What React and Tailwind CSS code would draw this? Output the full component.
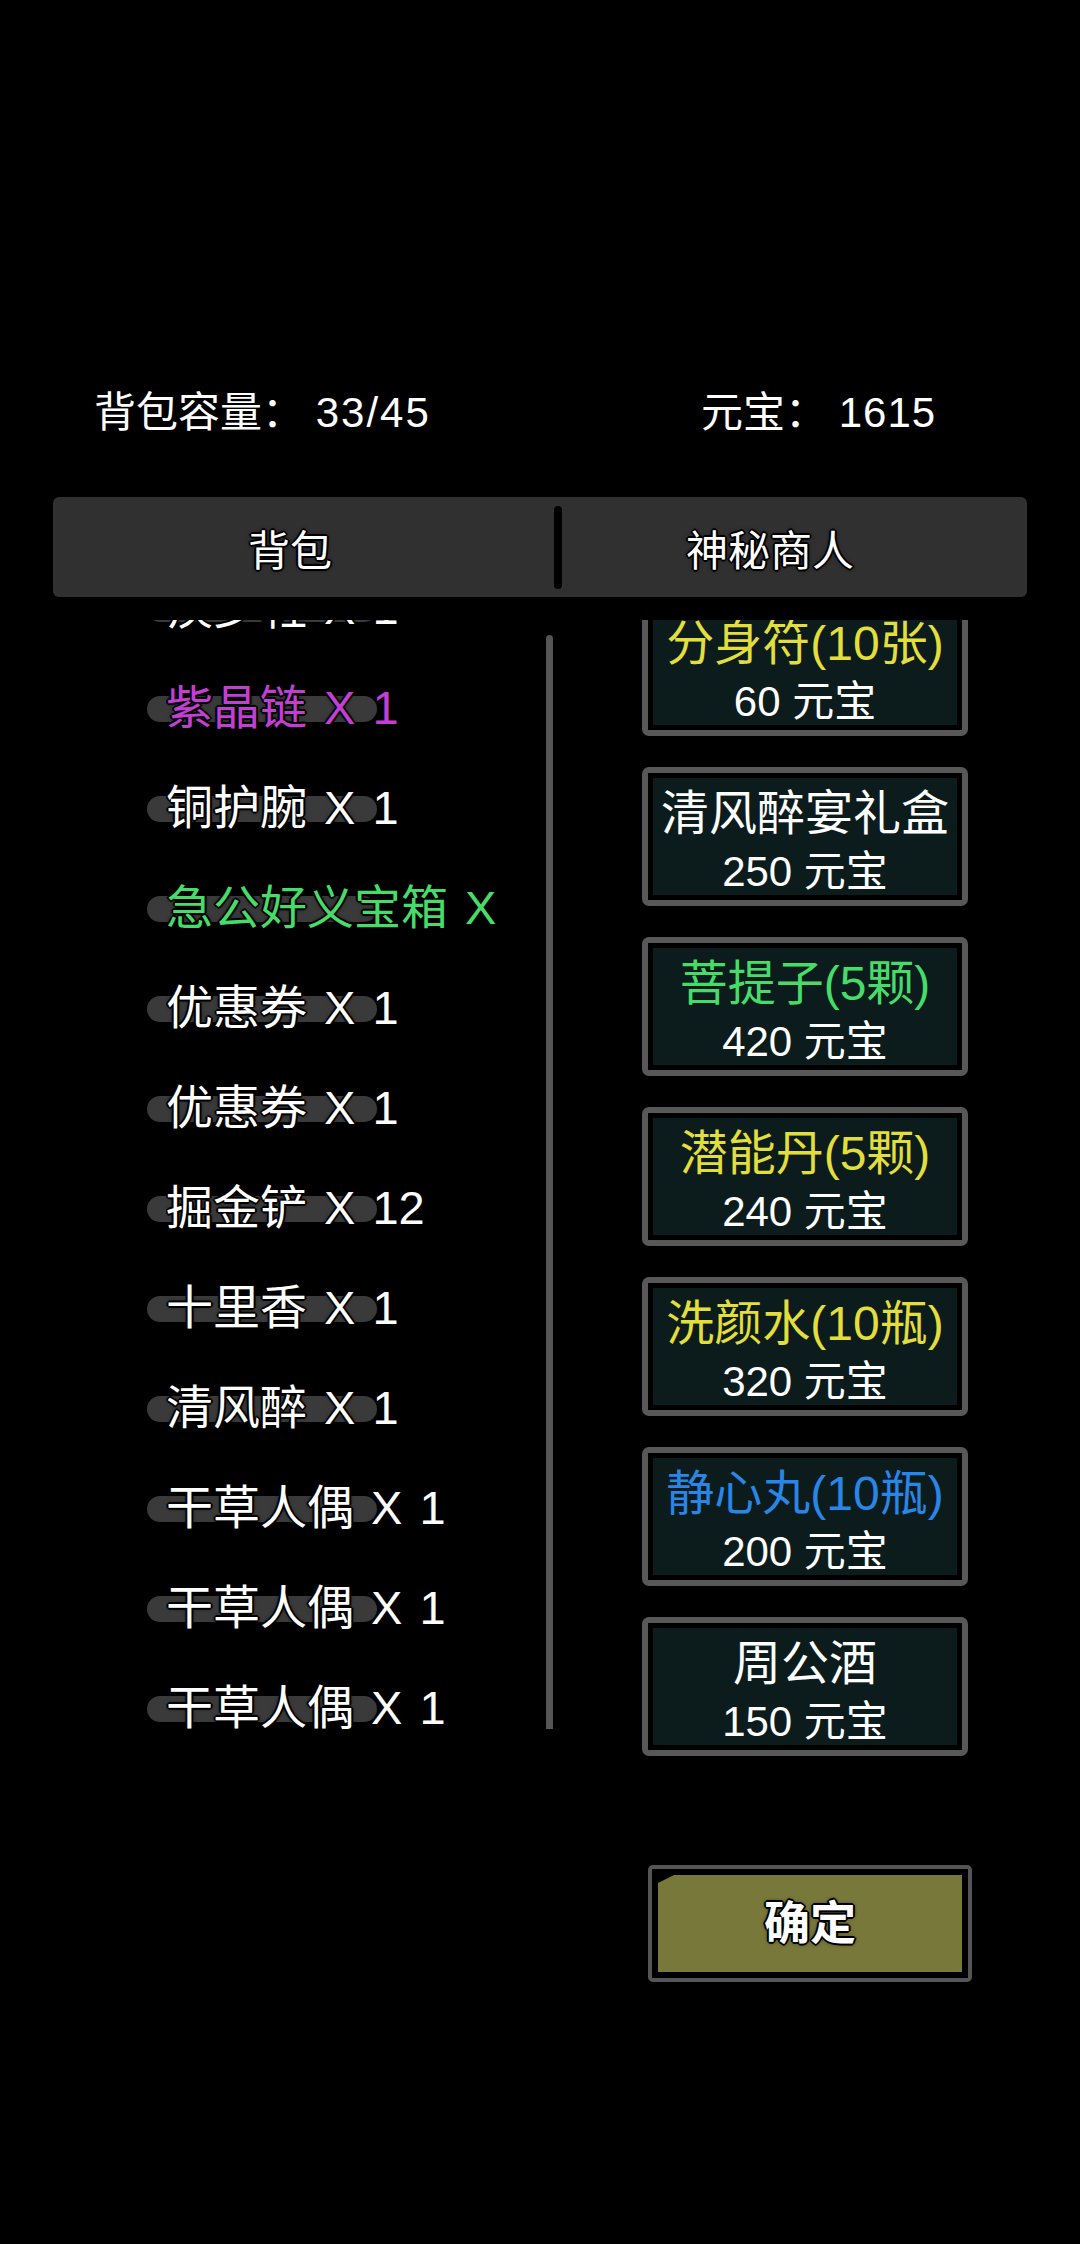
const FONT = { fontFamily: '"Liberation Sans", "Noto Sans CJK SC", sans-serif' };

const bagItems = [
  { name: "疾步鞋 X 1", color: "text-white" },
  { name: "紫晶链 X 1", color: "text-[#c23fd4]" },
  { name: "铜护腕 X 1", color: "text-white" },
  { name: "急公好义宝箱 X 1", color: "text-[#47dc6a]" },
  { name: "优惠券 X 1", color: "text-white" },
  { name: "优惠券 X 1", color: "text-white" },
  { name: "掘金铲 X 12", color: "text-white" },
  { name: "十里香 X 1", color: "text-white" },
  { name: "清风醉 X 1", color: "text-white" },
  { name: "干草人偶 X 1", color: "text-white" },
  { name: "干草人偶 X 1", color: "text-white" },
  { name: "干草人偶 X 1", color: "text-white" },
];

const shopItems = [
  { name: "分身符(10张)", price: 60, color: "text-[#e2de3c]" },
  { name: "清风醉宴礼盒", price: 250, color: "text-white" },
  { name: "菩提子(5颗)", price: 420, color: "text-[#47dc6a]" },
  { name: "潜能丹(5颗)", price: 240, color: "text-[#e2de3c]" },
  { name: "洗颜水(10瓶)", price: 320, color: "text-[#e2de3c]" },
  { name: "静心丸(10瓶)", price: 200, color: "text-[#2a86e6]" },
  { name: "周公酒", price: 150, color: "text-white" },
];

const outline =
  "[text-shadow:1px_1px_0_#000,-1px_-1px_0_#000,1px_-1px_0_#000,-1px_1px_0_#000,0_2px_0_#000,0_-2px_0_#000,2px_0_0_#000,-2px_0_0_#000,0_0_4px_#000]";

function BagRow({ item }) {
  return (
    <div className="relative h-[100px] flex items-center">
      {/* grey pill behind the label */}
      <div className="absolute left-[147px] top-[38px] w-[230px] h-[26px] rounded-full bg-[#3a3a3a]" />
      <div
        className={`relative ml-[166px] w-[338px] overflow-hidden whitespace-nowrap text-[47px] leading-[60px] [word-spacing:4px] ${item.color} ${outline}`}
      >
        {item.name}
      </div>
    </div>
  );
}

function ShopCard({ item }) {
  return (
    <div className="h-[139px] rounded-[7px] bg-[#585858] p-[6px]">
      <div className="h-full bg-black p-[5px]">
        <div className="h-full bg-[#0c1c1c] flex flex-col items-center pt-[8px] overflow-hidden">
          <div className={`text-[48px] leading-[56px] whitespace-nowrap ${item.color}`}>{item.name}</div>
          <div className="text-[42px] leading-[60px] text-white whitespace-nowrap">{item.price} 元宝</div>
        </div>
      </div>
    </div>
  );
}

export default function App() {
  return (
    <div className="w-[1080px] h-[2244px] bg-black text-white overflow-hidden" style={FONT}>
      {/* header */}
      <div className="pt-[383px] h-[443px] flex items-center text-[42px]">
        <div className="ml-[94px] w-[607px] leading-[60px]">
          背包容量： <span className="tracking-[2px]">33/45</span>
        </div>
        <div className="leading-[60px]">
          元宝： <span className="tracking-[1px]">1615</span>
        </div>
      </div>

      {/* tabs */}
      <div className="mt-[54px] mx-[53px] h-[100px] rounded-[6px] bg-[#303030] flex items-center">
        <div className={`w-[474px] pt-[8px] text-center text-[42px] ${outline}`}>背包</div>
        <div className="ml-[27px] w-[8px] h-[83px] rounded-full bg-black" />
        <div className={`w-[416px] pt-[8px] text-center text-[42px] ${outline}`}>神秘商人</div>
      </div>

      {/* content */}
      <div className="mt-[23px] h-[1150px] flex overflow-hidden">
        <div className="w-[546px] overflow-hidden">
          <div className="-mt-[62px]">
            {bagItems.map((item, i) => (
              <BagRow key={i} item={item} />
            ))}
          </div>
        </div>
        <div className="mt-[15px] w-[7px] h-[1094px] rounded-t-full bg-[#555555]" />
        <div className="ml-[89px] w-[326px] overflow-hidden">
          <div className="-mt-[23px] flex flex-col gap-[31px]">
            {shopItems.map((item, i) => (
              <ShopCard key={i} item={item} />
            ))}
          </div>
        </div>
      </div>

      {/* confirm */}
      <div className="mt-[95px] ml-[648px] w-[324px] h-[117px] rounded-[5px] bg-[#555555] p-[4px]">
        <div className="h-full bg-black p-[6px]">
          <div className="h-full bg-[#78783a] flex items-center justify-center [clip-path:polygon(16px_0,100%_0,100%_100%,0_100%,0_8px)]">
            <span className={`text-[46px] font-bold ${outline}`}>确定</span>
          </div>
        </div>
      </div>
    </div>
  );
}
